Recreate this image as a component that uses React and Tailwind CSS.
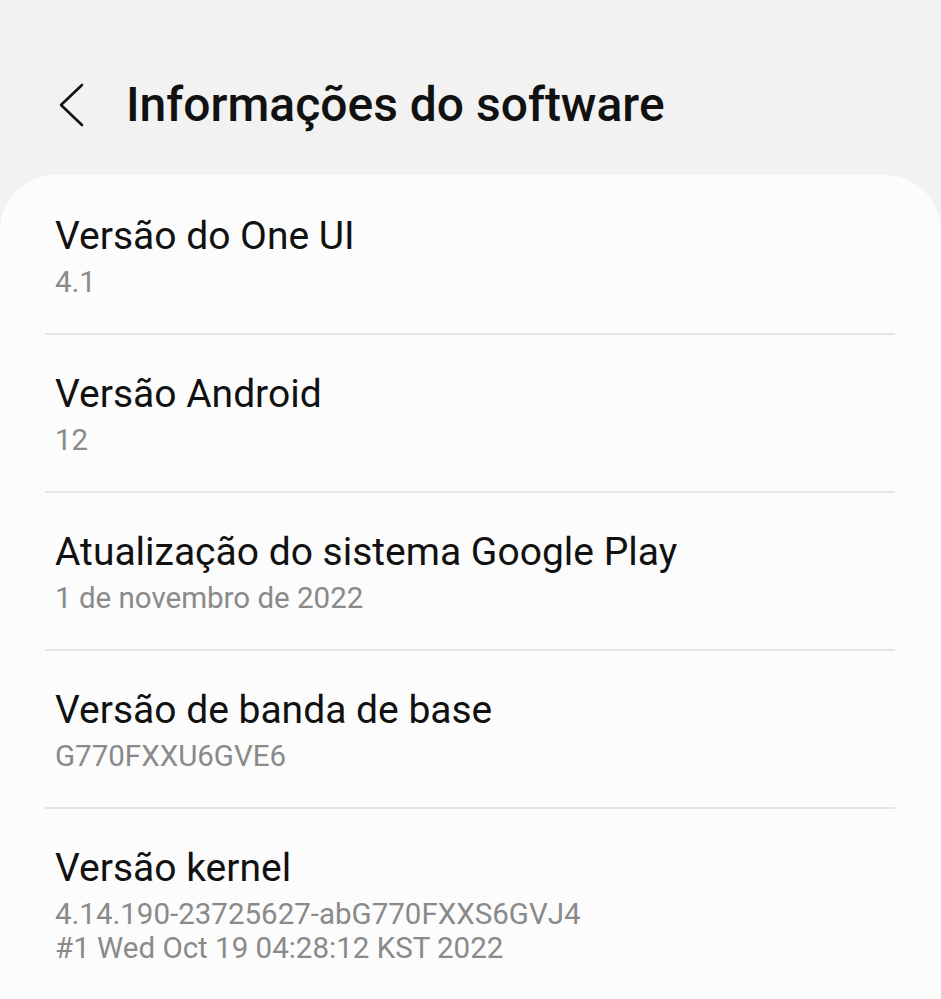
import React from "react";

const items = [
    { titulo: "Versão do One UI", valor: ["4.1"] },
    { titulo: "Versão Android", valor: ["12"] },
    { titulo: "Atualização do sistema Google Play", valor: ["1 de novembro de 2022"] },
    { titulo: "Versão de banda de base", valor: ["G770FXXU6GVE6"] },
    { titulo: "Versão kernel", valor: ["4.14.190-23725627-abG770FXXS6GVJ4", "#1 Wed Oct 19 04:28:12 KST 2022"] },
];

export default function App() {
    return (
        <div className="min-h-screen bg-[#f2f2f2] flex flex-col" style={{ fontFamily: "Roboto, 'Noto Sans', sans-serif" }}>
            {/* Cabeçalho */}
            <div className="flex items-start h-[175px] pt-[77px]">
                <div className="w-[126px] h-[56px] flex items-center pl-[56px]">
                    <svg width="30" height="44" viewBox="0 0 30 44" fill="none">
                        <path d="M26 2 L5 22 L26 42" stroke="#111" strokeWidth="2.6" strokeLinecap="round" strokeLinejoin="round" />
                    </svg>
                </div>
                <h1 className="text-[48px] leading-[56px] font-medium text-[#111]">Informações do software</h1>
            </div>

            {/* Lista */}
            <div className="flex-1 bg-[#fcfcfc] rounded-t-[56px]">
                {items.map((item, i) => (
                    <div key={item.titulo}>
                        <div className={`pl-[55px] pr-[46px] pb-[34px] ${i === 0 ? "pt-[39px]" : "pt-[37px]"}`}>
                            <div className="text-[39px] leading-[44px] text-[#111]">{item.titulo}</div>
                            <div className="mt-[7px]">
                                {item.valor.map(v => (
                                    <div key={v} className="text-[29.5px] leading-[34px] text-[#8a8a8a]">{v}</div>
                                ))}
                            </div>
                        </div>
                        {i < items.length - 1 && (
                            <div className="ml-[45px] mr-[46px] h-[2px] bg-[#e6e6e6]" />
                        )}
                    </div>
                ))}
            </div>
        </div>
    );
}
